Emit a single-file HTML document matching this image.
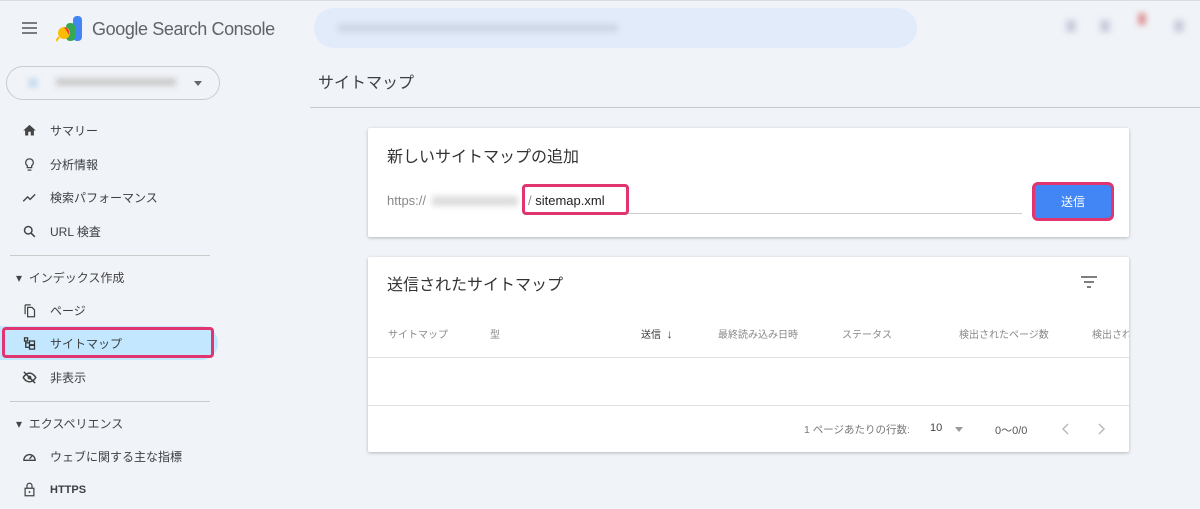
<!DOCTYPE html>
<html><head><meta charset="utf-8"><style>
*{box-sizing:border-box;margin:0;padding:0}
body{width:1200px;height:509px;overflow:hidden;background:#f0f3f8;font-family:"Liberation Sans","Noto Sans CJK JP",sans-serif;color:#3c4043;position:relative}
.a{position:absolute}
.nav{position:absolute;left:22px;font-size:12px;color:#3c4043;display:flex;align-items:center}
.nav svg{width:15px;height:15px;margin-right:13px}
.sec{position:absolute;left:16px;font-size:12px;color:#444}
.card{position:absolute;background:#fff;box-shadow:0 1px 3px rgba(0,0,0,.25);border-radius:2px}
.th{position:absolute;top:326px;font-size:10px;color:#888}
.pink{position:absolute;border:3px solid #e0356f;border-radius:4px}
</style></head><body>
<div class="a" style="left:0;top:0;width:1200px;height:1px;background:#dadce0"></div>
<svg class="a" style="left:22px;top:22px" width="16" height="12"><path d="M0 1h15M0 6h15M0 11h15" stroke="#555" stroke-width="1.6"/></svg>
<svg class="a" style="left:56px;top:16px" width="28" height="28"><rect x="17" y="0" width="9" height="25" rx="4" fill="#4285f4"/><rect x="10" y="7" width="9" height="18" rx="4" fill="#34a853"/><circle cx="8" cy="17" r="6" fill="#fbbc04"/><path d="M3 21l-3 4" stroke="#fbbc04" stroke-width="2"/><path d="M8 11a6 6 0 0 1 5 8" fill="#ea4335"/></svg>
<div class="a" style="left:92px;top:19px;font-size:18px;letter-spacing:-0.4px;color:#5f6368">Google Search Console</div>
<div class="a" style="left:314px;top:8px;width:603px;height:40px;border-radius:20px;background:#e2ebfa"></div>
<div class="a" style="left:338px;top:24px;width:280px;height:8px;background:#cdd6e6;filter:blur(3px)"></div>
<div class="a" style="left:1066px;top:20px;width:10px;height:12px;background:#ccd;filter:blur(3px)"></div>
<div class="a" style="left:1100px;top:20px;width:10px;height:12px;background:#ccd;filter:blur(3px)"></div>
<div class="a" style="left:1138px;top:13px;width:8px;height:12px;background:#e09999;filter:blur(3px)"></div>
<div class="a" style="left:1174px;top:20px;width:10px;height:12px;background:#ccd;filter:blur(3px)"></div>
<div class="a" style="left:6px;top:66px;width:214px;height:34px;border:1px solid #c8ccd2;border-radius:17px"></div>
<div class="a" style="left:28px;top:78px;width:10px;height:10px;background:#cfe0ee;filter:blur(2px)"></div>
<div class="a" style="left:56px;top:78px;width:120px;height:8px;background:#ccc;filter:blur(3px)"></div>
<div class="a" style="left:194px;top:81px;border:4px solid transparent;border-top:5px solid #666"></div>
<div class="nav" style="top:122px"><svg viewBox="0 0 24 24"><path d="M10 20v-6h4v6h5v-8h3L12 3 2 12h3v8z" fill="#444"/></svg>サマリー</div>
<div class="nav" style="top:156px"><svg viewBox="0 0 24 24"><path d="M9 21h6M12 3a6 6 0 0 0-3.5 10.9V17h7v-3.1A6 6 0 0 0 12 3z" fill="none" stroke="#444" stroke-width="2"/></svg>分析情報</div>
<div class="nav" style="top:189px"><svg viewBox="0 0 24 24"><path d="M2 18l7-7 4 4 8-8" fill="none" stroke="#444" stroke-width="2.2"/></svg>検索パフォーマンス</div>
<div class="nav" style="top:223px"><svg viewBox="0 0 24 24"><circle cx="10" cy="10" r="6" fill="none" stroke="#444" stroke-width="2.4"/><path d="M14.5 14.5l6 6" stroke="#444" stroke-width="2.6"/></svg>URL 検査</div>
<div class="a" style="left:10px;top:255px;width:200px;height:1px;background:#ccc"></div>
<div class="sec" style="top:269px">▾&nbsp; インデックス作成</div>
<div class="nav" style="top:302px"><svg viewBox="0 0 24 24"><path d="M5 3v15M5 3h9M9 7h7l4 4v11H9z" fill="none" stroke="#444" stroke-width="2"/></svg>ページ</div>
<div class="a" style="left:0;top:326px;width:218px;height:34px;background:#c2e7ff;border-radius:0 17px 17px 0"></div>
<div class="pink" style="left:2px;top:327px;width:212px;height:31px"></div>
<div class="nav" style="top:335px"><svg viewBox="0 0 24 24"><path d="M4 3h5v5H4zM6 8v10h6M6 11h6M12 8h8v6h-8zM12 15h8v6h-8z" fill="none" stroke="#333" stroke-width="2"/></svg>サイトマップ</div>
<div class="nav" style="top:369px"><svg viewBox="0 0 24 24"><path d="M2 12s4-7 10-7 10 7 10 7-4 7-10 7S2 12 2 12z" fill="none" stroke="#444" stroke-width="2.4"/><circle cx="12" cy="12" r="3" fill="#444"/><path d="M3 3l18 18" stroke="#444" stroke-width="2.4"/></svg>非表示</div>
<div class="a" style="left:10px;top:401px;width:200px;height:1px;background:#ccc"></div>
<div class="sec" style="top:415px">▾&nbsp; エクスペリエンス</div>
<div class="nav" style="top:448px"><svg viewBox="0 0 24 24"><path d="M3 18a9 9 0 1 1 18 0z" fill="none" stroke="#444" stroke-width="2.2"/><path d="M12 16l4-5" stroke="#444" stroke-width="2.2"/></svg>ウェブに関する主な指標</div>
<div class="nav" style="top:482px;font-weight:bold;font-size:11px"><svg viewBox="0 0 24 24"><rect x="5" y="10" width="14" height="12" fill="none" stroke="#444" stroke-width="2"/><path d="M8 10V6a4 4 0 0 1 8 0v4" fill="none" stroke="#444" stroke-width="2"/><circle cx="12" cy="16" r="1.5" fill="#444"/></svg>HTTPS</div>
<div class="a" style="left:318px;top:69px;font-size:16px;color:#3c4043">サイトマップ</div>
<div class="a" style="left:310px;top:107px;width:890px;height:1px;background:#c8c8c8"></div>
<div class="card" style="left:368px;top:128px;width:761px;height:109px">
 <div class="a" style="left:19px;top:15px;font-size:16px;color:#333">新しいサイトマップの追加</div>
 <div class="a" style="left:19px;top:65px;font-size:13px;color:#888">https://</div>
 <div class="a" style="left:64px;top:68px;width:86px;height:10px;background:#ddd;filter:blur(3px)"></div>
 <div class="a" style="left:155px;top:85px;width:499px;height:1px;background:#ccc"></div>
 <div class="a" style="left:160px;top:65px;font-size:13px;color:#222"><span style="color:#888">/</span> sitemap.xml</div>
 <div class="pink" style="left:154px;top:56px;width:107px;height:31px"></div>
 <div class="a" style="left:667px;top:57px;width:76px;height:33px;background:#4285f4;border-radius:3px;box-shadow:0 0 0 3px #e0356f;color:#fff;font-size:12px;display:flex;align-items:center;justify-content:center">送信</div>
</div>
<div class="card" style="left:368px;top:257px;width:761px;height:195px;overflow:hidden">
 <div class="a" style="left:19px;top:14px;font-size:16px;color:#333">送信されたサイトマップ</div>
 <svg class="a" style="left:713px;top:19px" width="16" height="12"><path d="M0 1h16M3 6h10M6 11h4" stroke="#555" stroke-width="1.6"/></svg>
 <div class="a" style="left:0;top:100px;width:761px;height:1px;background:#e0e0e0"></div>
 <div class="a" style="left:0;top:148px;width:761px;height:1px;background:#e0e0e0"></div>
 <div class="a" style="left:436px;top:165px;font-size:10.5px;color:#777">1 ページあたりの行数:</div>
 <div class="a" style="left:562px;top:165px;font-size:11px;color:#444">10</div>
 <div class="a" style="left:587px;top:170px;border:4px solid transparent;border-top:5px solid #999"></div>
 <div class="a" style="left:627px;top:165px;font-size:11px;color:#555">0〜0/0</div>
 <svg class="a" style="left:693px;top:166px" width="8" height="12"><path d="M7 1L2 6l5 5" fill="none" stroke="#bbb" stroke-width="1.5"/></svg>
 <svg class="a" style="left:730px;top:166px" width="8" height="12"><path d="M1 1l5 5-5 5" fill="none" stroke="#bbb" stroke-width="1.5"/></svg>
</div>
<div class="th" style="left:388px">サイトマップ</div>
<div class="th" style="left:490px">型</div>
<div class="th" style="left:641px;color:#333">送信 &nbsp;<b style="font-size:12px">↓</b></div>
<div class="th" style="left:718px">最終読み込み日時</div>
<div class="th" style="left:842px">ステータス</div>
<div class="th" style="left:959px">検出されたページ数</div>
<div class="th" style="left:1092px;width:37px;overflow:hidden;white-space:nowrap">検出された</div>
</body></html>
